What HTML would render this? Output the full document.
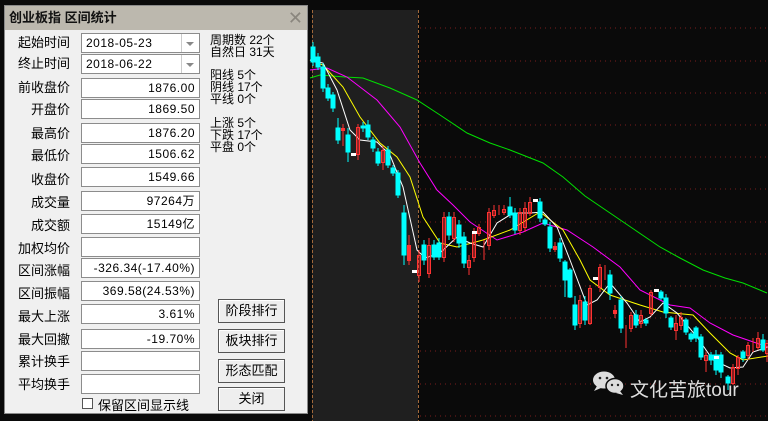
<!DOCTYPE html>
<html><head><meta charset="utf-8"><style>
body{margin:0;width:768px;height:421px;background:#0a0a0a;overflow:hidden;position:relative;font-family:"Liberation Sans","Noto Sans CJK SC",sans-serif}
#chart{position:absolute;left:0;top:0}
#dlg{position:absolute;left:4px;top:5px;width:304px;height:409px;background:#f0f0f0;border:1px solid #8a8a8a;box-sizing:border-box}
#tb{position:absolute;left:0;top:0;width:302px;height:24px;background:#bcb8ae;font-weight:bold;font-size:13px;line-height:24px;padding-left:4px;color:#111;box-sizing:border-box}
#tb .x{position:absolute;right:4px;top:0;font-weight:normal;color:#8a867e;font-size:18px}
.lab{position:absolute;width:65px;text-align:right;font-size:13px;color:#000;line-height:19px}
.box{position:absolute;left:76px;width:119px;height:20px;background:#fff;border:1px solid #8c8c8c;box-sizing:border-box;font-size:12px;line-height:18px;text-align:right;padding-right:4px;letter-spacing:0.5px;font-family:"Liberation Sans","Noto Sans CJK SC",sans-serif}
.dd{text-align:left;padding-left:4px}
.dd:after{content:"";position:absolute;right:0;top:0;width:17px;height:18px;border-left:1px solid #ccc;background:#fff}
.dd i{position:absolute;right:5px;top:8px;width:0;height:0;border-left:4px solid transparent;border-right:4px solid transparent;border-top:4px solid #888;z-index:2}
.info{position:absolute;left:205px;font-size:12px;line-height:12px;color:#000}
.btn{position:absolute;left:213px;width:67px;height:24px;border:1px solid #555;background:#eee;box-sizing:border-box;font-size:13px;text-align:center;line-height:22px;box-shadow:inset 1px 1px #fff}
</style></head><body>
<svg id="chart" width="768" height="421">
<rect x="312" y="10" width="106" height="411" fill="#1f1f1f"/>
<g stroke="#7a1c1c" stroke-dasharray="1,4" stroke-width="1">
<line x1="420" y1="28" x2="768" y2="28"/><line x1="420" y1="61" x2="768" y2="61"/><line x1="420" y1="93" x2="768" y2="93"/><line x1="420" y1="125" x2="768" y2="125"/><line x1="420" y1="157" x2="768" y2="157"/><line x1="420" y1="189" x2="768" y2="189"/><line x1="420" y1="222" x2="768" y2="222"/><line x1="420" y1="254" x2="768" y2="254"/><line x1="420" y1="286" x2="768" y2="286"/><line x1="420" y1="318" x2="768" y2="318"/><line x1="420" y1="351" x2="768" y2="351"/><line x1="420" y1="384" x2="768" y2="384"/><line x1="420" y1="416" x2="768" y2="416"/>
</g>
<g stroke="#a0683a" stroke-dasharray="3,2"><line x1="312.5" y1="10" x2="312.5" y2="421"/><line x1="418.5" y1="10" x2="418.5" y2="421"/></g>
<polyline fill="none" stroke="#00e000" points="310,78 320,75 345,77 363,78 390,88 417,100 440,115 467,133 490,143 510,150 543,163 563,177 585,196 610,213 635,230 660,247 680,258 703,270 725,278 743,283 767,293"/>
<polyline fill="none" stroke="#ff00ff" points="310,70 327,68 347,77 377,100 400,127 420,163 437,190 453,205 470,222 497,240 523,232 543,223 567,230 593,247 620,267 640,290 670,305 690,308 710,323 733,335 768,347"/>
<polyline fill="none" stroke="#ffff00" points="310,60 323,65 343,87 360,117 380,143 397,157 410,177 423,217 440,243 457,247 483,240 510,230 540,212 563,230 580,260 590,280 610,295 640,305 663,312 693,315 710,333 730,353 743,360 768,356"/>
<polyline fill="none" stroke="#ffffff" points="310,60 323,63 337,90 350,130 360,140 377,142 390,155 403,187 417,250 425,258 440,253 457,237 470,243 483,247 497,223 513,213 530,213 543,212 557,227 570,260 587,305 597,300 610,283 627,303 640,322 650,317 663,303 677,313 697,337 713,360 730,368 743,367 753,352 768,347"/>
<g fill="#00ffff" stroke="#00ffff">
<path d="M313 42V66M318 53V70M323 63V92M328 84V101M333 92V112M338 118V144M348 128V162M363 122V132M368 120V140M373 137V152M378 148V166M388 146V168M393 165V176M398 170V198M404 205V265M424 240V265M434 240V260M439 238V260M449 212V240M459 220V248M464 232V268M510 197V218M515 208V234M540 198V222M545 218V226M550 222V252M560 238V262M565 260V297M570 268V298M575 296V330M585 296V325M610 270V300M621 296V333M636 310V328M646 318V326M661 290V300M666 294V318M671 316V330M686 318V335M691 332V342M696 326V342M701 334V360M711 352V365M716 350V375M721 352V378M728 375V390M743 350V362M763 334V352" fill="none"/>
<rect x="311" y="47" width="4" height="15"/><rect x="316" y="57" width="4" height="10"/><rect x="321" y="67" width="4" height="21"/><rect x="326" y="88" width="4" height="10"/><rect x="331" y="95" width="4" height="13"/><rect x="336" y="128" width="4" height="12"/><rect x="346" y="135" width="4" height="17"/><rect x="361" y="126" width="4" height="2"/><rect x="366" y="125" width="4" height="12"/><rect x="371" y="140" width="4" height="8"/><rect x="376" y="152" width="4" height="11"/><rect x="386" y="150" width="4" height="15"/><rect x="391" y="168" width="4" height="5"/><rect x="396" y="173" width="4" height="22"/><rect x="402" y="213" width="4" height="42"/><rect x="422" y="245" width="4" height="15"/><rect x="432" y="245" width="4" height="12"/><rect x="437" y="243" width="4" height="14"/><rect x="447" y="217" width="4" height="18"/><rect x="457" y="225" width="4" height="18"/><rect x="462" y="237" width="4" height="26"/><rect x="508" y="207" width="4" height="8"/><rect x="513" y="213" width="4" height="17"/><rect x="538" y="202" width="4" height="16"/><rect x="543" y="220" width="4" height="4"/><rect x="548" y="227" width="4" height="21"/><rect x="558" y="243" width="4" height="15"/><rect x="563" y="262" width="4" height="18"/><rect x="568" y="270" width="4" height="27"/><rect x="573" y="305" width="4" height="20"/><rect x="583" y="302" width="4" height="18"/><rect x="608" y="275" width="4" height="18"/><rect x="619" y="300" width="4" height="28"/><rect x="634" y="315" width="4" height="10"/><rect x="644" y="320" width="4" height="3"/><rect x="659" y="292" width="4" height="6"/><rect x="664" y="298" width="4" height="15"/><rect x="669" y="318" width="4" height="9"/><rect x="684" y="320" width="4" height="12"/><rect x="689" y="334" width="4" height="5"/><rect x="694" y="328" width="4" height="10"/><rect x="699" y="337" width="4" height="20"/><rect x="709" y="355" width="4" height="5"/><rect x="714" y="355" width="4" height="15"/><rect x="719" y="355" width="4" height="17"/><rect x="726" y="377" width="4" height="6"/><rect x="741" y="352" width="4" height="6"/><rect x="761" y="340" width="4" height="10"/>
</g>
<g fill="none" stroke="#ff3232">
<path d="M343 124V146M358 124V160M383 146V170M409 235V265M419 250V282M429 238V278M444 212V262M454 212V242M469 255V275M474 228V262M479 224V236M484 240V260M489 208V250M494 205V218M499 205V215M504 205V215M520 208V235M525 202V232M530 197V216M555 242V252M580 295V328M590 285V325M600 264V292M605 265V280M615 305V318M626 325V348M631 312V332M641 310V328M651 290V316M676 315V340M681 312V330M706 352V372M733 364V385M738 355V375M748 342V360M753 338V352M758 332V350M767 340V362"/>
<rect x="341.5" y="128.5" width="3" height="2" fill="#ff3232"/><rect x="356.5" y="127.5" width="3" height="27"/><rect x="381.5" y="150.5" width="3" height="12"/><rect x="407.5" y="245.5" width="3" height="15" fill="#ff3232"/><rect x="417.5" y="255.5" width="3" height="20"/><rect x="427.5" y="245.5" width="3" height="28"/><rect x="442.5" y="217.5" width="3" height="40"/><rect x="452.5" y="217.5" width="3" height="21"/><rect x="467.5" y="260.5" width="3" height="7"/><rect x="472.5" y="233.5" width="3" height="24"/><rect x="477.5" y="227.5" width="3" height="6"/><rect x="487.5" y="212.5" width="3" height="33"/><rect x="492.5" y="210.5" width="3" height="5"/><rect x="502.5" y="209.5" width="3" height="3"/><rect x="518.5" y="212.5" width="3" height="18"/><rect x="523.5" y="208.5" width="3" height="19"/><rect x="528.5" y="202.5" width="3" height="11"/><rect x="553.5" y="246.5" width="3" height="3" fill="#ff3232"/><rect x="578.5" y="300.5" width="3" height="23"/><rect x="588.5" y="288.5" width="3" height="35"/><rect x="598.5" y="267.5" width="3" height="20"/><rect x="613.5" y="310.5" width="3" height="3" fill="#ff3232"/><rect x="629.5" y="315.5" width="3" height="13"/><rect x="639.5" y="315.5" width="3" height="8"/><rect x="649.5" y="292.5" width="3" height="21"/><rect x="674.5" y="323.5" width="3" height="7"/><rect x="679.5" y="317.5" width="3" height="8"/><rect x="704.5" y="355.5" width="3" height="5"/><rect x="731.5" y="367.5" width="3" height="16"/><rect x="736.5" y="357.5" width="3" height="11"/><rect x="746.5" y="345.5" width="3" height="10"/><rect x="756.5" y="338.5" width="3" height="9"/><rect x="765.5" y="343.5" width="3" height="10"/>
</g>
<g fill="#fff"><rect x="351" y="153" width="5" height="3"/><rect x="412" y="270" width="5" height="3"/><rect x="472" y="231" width="5" height="3"/><rect x="533" y="199" width="5" height="3"/><rect x="593" y="277" width="5" height="3"/><rect x="654" y="289" width="5" height="3"/><rect x="714" y="356" width="5" height="3"/></g>
<g fill="#dcdcdc"><ellipse cx="604" cy="380" rx="11" ry="8.5"/><path d="M597 386l-3 5 7-3z"/><ellipse cx="615" cy="386" rx="9" ry="7.5" stroke="#0a0a0a" stroke-width="1.5"/><path d="M620 391l3 4-7-2z"/></g>
<g fill="#222"><circle cx="600" cy="378" r="1.3"/><circle cx="607" cy="378" r="1.3"/><circle cx="612" cy="385" r="1.2"/><circle cx="618" cy="385" r="1.2"/></g>
<text x="630" y="396" font-size="19" fill="#dedede" font-family="Liberation Sans,Noto Sans CJK SC,sans-serif">文化苦旅tour</text>
</svg>
<div id="dlg">
<div id="tb">创业板指 区间统计<span class="x">✕</span></div>
<div class="lab" style="top:27px">起始时间</div><div class="box dd" style="top:27px">2018-05-23<i></i></div>
<div class="lab" style="top:48px">终止时间</div><div class="box dd" style="top:48px">2018-06-22<i></i></div>
<div class="lab" style="top:72px">前收盘价</div><div class="box" style="top:72px">1876.00</div>
<div class="lab" style="top:94px">开盘价</div><div class="box" style="top:93px">1869.50</div>
<div class="lab" style="top:118px">最高价</div><div class="box" style="top:117px">1876.20</div>
<div class="lab" style="top:140px">最低价</div><div class="box" style="top:138px">1506.62</div>
<div class="lab" style="top:164px">收盘价</div><div class="box" style="top:161px">1549.66</div>
<div class="lab" style="top:187px">成交量</div><div class="box" style="top:185px">97264万</div>
<div class="lab" style="top:210px">成交额</div><div class="box" style="top:208px">15149亿</div>
<div class="lab" style="top:233px">加权均价</div><div class="box" style="top:231px"></div>
<div class="lab" style="top:255px">区间涨幅</div><div class="box" style="top:252px">-326.34(-17.40%)</div>
<div class="lab" style="top:278px">区间振幅</div><div class="box" style="top:275px">369.58(24.53%)</div>
<div class="lab" style="top:301px">最大上涨</div><div class="box" style="top:298px">3.61%</div>
<div class="lab" style="top:324px">最大回撤</div><div class="box" style="top:323px">-19.70%</div>
<div class="lab" style="top:346px">累计换手</div><div class="box" style="top:345px"></div>
<div class="lab" style="top:369px">平均换手</div><div class="box" style="top:368px"></div>
<div style="position:absolute;left:77px;top:392px;width:11px;height:11px;background:#fff;border:1px solid #555;box-sizing:border-box"></div>
<div style="position:absolute;left:93px;top:389px;font-size:13px">保留区间显示线</div>
<div class="info" style="top:28px">周期数 22个<br>自然日 31天</div>
<div class="info" style="top:63px">阳线 5个<br>阴线 17个<br>平线 0个</div>
<div class="info" style="top:111px">上涨 5个<br>下跌 17个<br>平盘 0个</div>
<div class="btn" style="top:293px">阶段排行</div>
<div class="btn" style="top:323px">板块排行</div>
<div class="btn" style="top:353px">形态匹配</div>
<div class="btn" style="top:381px">关闭</div>
</div>
</body></html>
